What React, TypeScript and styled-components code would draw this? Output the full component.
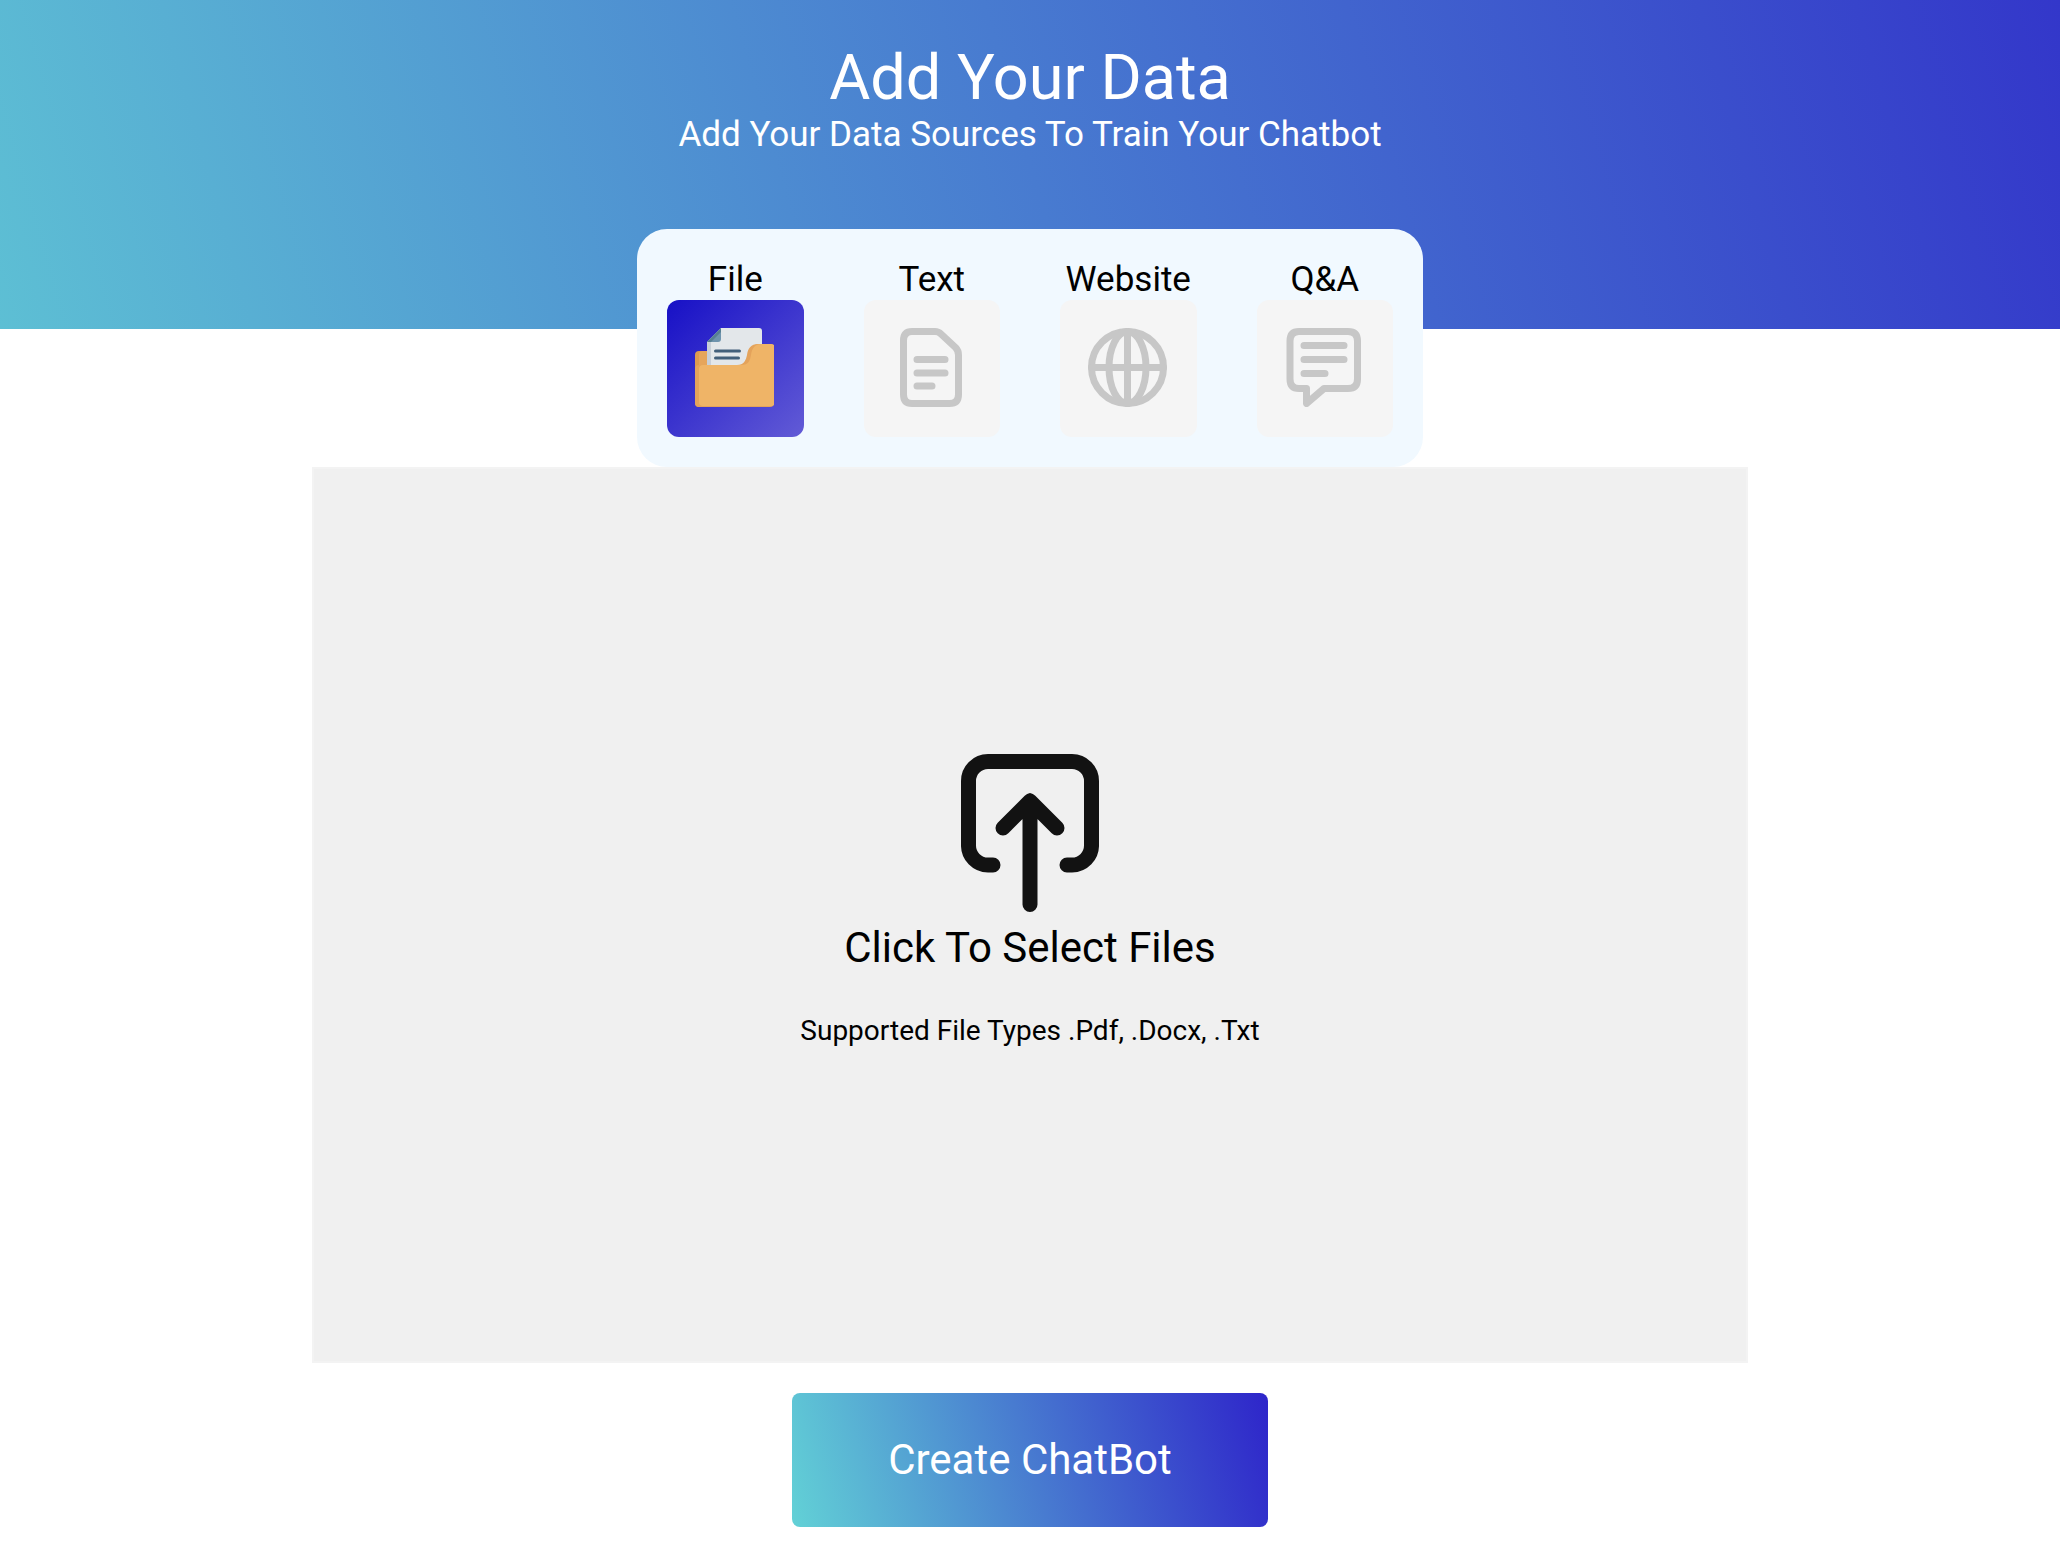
import React, { useRef, useState } from "react";
import styled, { createGlobalStyle, css } from "styled-components";

const GlobalStyle = createGlobalStyle`
  *, *::before, *::after { box-sizing: border-box; }
  body {
    margin: 0;
    background: #ffffff;
    color: #000000;
    font-family: Roboto, "Liberation Sans", sans-serif;
  }
  button { font-family: inherit; color: inherit; cursor: pointer; }
`;

const Page = styled.div`
  display: flex;
  flex-direction: column;
  align-items: center;
`;

const Hero = styled.header`
  align-self: stretch;
  height: 329px;
  padding-top: 40px;
  text-align: center;
  color: #ffffff;
  background: linear-gradient(74deg, #5dbfd4 0%, #487bd0 50%, #3337ca 100%);
`;

const Title = styled.h1`
  margin: 0;
  font-size: 63px;
  line-height: 76px;
  font-weight: 400;
`;

const Subtitle = styled.p`
  margin: 0;
  font-size: 35px;
  line-height: 38px;
`;

const SourceTabs = styled.nav`
  display: grid;
  grid-template-columns: repeat(4, 1fr);
  gap: 60px;
  width: 786px;
  max-width: 100%;
  margin-top: -100px;
  padding: 30px;
  border-radius: 30px;
  background: #f1f9ff;
`;

const SourceButton = styled.button`
  display: flex;
  flex-direction: column;
  align-items: center;
  padding: 0;
  border: 0;
  background: none;
  font-size: 35px;
  line-height: 41px;
`;

const IconTile = styled.span<{ $active: boolean }>`
  display: flex;
  align-items: center;
  justify-content: center;
  align-self: stretch;
  height: 137px;
  padding: 0 2px 2px 0;
  border-radius: 12px;
  background: #f5f5f5;
  ${({ $active }) =>
    $active &&
    css`
      background: linear-gradient(135deg, #1710c6 0%, #625bd6 100%);
    `}
`;

const DropPanel = styled.button`
  display: flex;
  flex-direction: column;
  align-items: center;
  justify-content: center;
  width: calc(100% - 624px);
  min-width: 640px;
  height: 896px;
  padding: 0 0 28px;
  border: 2px solid #f3f3f3;
  background: #f0f0f0;
`;

const PanelHeading = styled.span`
  margin-top: 11px;
  font-size: 42px;
  line-height: 50px;
`;

const PanelHint = styled.span`
  margin-top: 41px;
  font-size: 28px;
  line-height: 34px;
`;

const CreateButton = styled.button`
  width: 476px;
  height: 134px;
  margin: 30px 0 19px;
  padding: 0;
  border: 0;
  border-radius: 8px;
  color: #ffffff;
  font-size: 42px;
  line-height: 50px;
  background: linear-gradient(74deg, #62d1d6 0%, #487bd0 50%, #2e25ca 100%);
`;

const FolderIcon = () => (
  <svg width="79" height="79" viewBox="0 0 79 79" aria-hidden="true">
    <path d="M0 27q0-4 4-4h14v56H4q-4 0-4-4z" fill="#dd9a4f" />
    <path d="M4 27q0-4 4-4h14v26H4z" fill="#e6a55b" />
    <path d="M12 14 26 0h38q3 0 3 3v40H12z" fill="#e3e7ea" />
    <path d="M12 14h4v25h-4z" fill="#c8cfd8" />
    <path d="M12 14 26 0v11q0 3-3 3z" fill="#6f94ad" />
    <path d="M12 14 26 0v4L16 14z" fill="#567f92" />
    <path d="M46 37c8-2 6-9 8-14 2-4 5-7 11-7l-3 24z" fill="#e3a05a" />
    <path d="M20.500 23h24M20.500 30h23" stroke="#425f7a" strokeWidth="3" strokeLinecap="round" />
    <path
      d="M4 37h38c7 0 9-5 10-10 1-7 4-11 11-11h12q4 0 4 4v55q0 4-4 4H4q-4 0-4-4V41q0-4 4-4z"
      fill="#e4a35b"
    />
    <path
      d="M8 37h38c8 0 9-5 10-10 1-7 4-11 10-11h10q4 0 4 4v54q0 4-4 4H8q-4 0-4-4V41q0-4 4-4z"
      fill="#efb467"
    />
  </svg>
);

const OutlineIcon = ({ children }: { children: React.ReactNode }) => (
  <svg
    width="79"
    height="79"
    viewBox="0 0 79 79"
    fill="none"
    stroke="#c7c7c7"
    strokeWidth="7"
    strokeLinecap="round"
    strokeLinejoin="round"
    aria-hidden="true"
  >
    {children}
  </svg>
);

const TextIcon = () => (
  <OutlineIcon>
    <path d="M21 3.500H44Q47.500 3.500 50 6L64.500 19.500Q67.500 22.500 67.500 27V66.500Q67.500 75.500 58.500 75.500H21Q12.500 75.500 12.500 66.500V12.500Q12.500 3.500 21 3.500Z" />
    <path d="M26 31.500h28M26 45h28M26 58h15" />
  </OutlineIcon>
);

const GlobeIcon = () => (
  <OutlineIcon>
    <circle cx="39.500" cy="39.500" r="36" />
    <ellipse cx="39.500" cy="39.500" rx="18.500" ry="36" />
    <path d="M39.500 3.500v72M3.500 39.500h72" />
  </OutlineIcon>
);

const ChatIcon = () => (
  <OutlineIcon>
    <path d="M15 3.500H64Q73.500 3.500 73.500 13V51Q73.500 60.500 64 60.500H40L22.500 75.500V60.500H15Q6 60.500 6 51V13Q6 3.500 15 3.500Z" />
    <path d="M20 17.500h40M20 31.500h40M20 45.500h21" />
  </OutlineIcon>
);

const UploadIcon = () => (
  <svg
    width="138"
    height="158"
    viewBox="0 0 138 158"
    fill="none"
    stroke="#121212"
    strokeWidth="15"
    strokeLinecap="round"
    strokeLinejoin="round"
    aria-hidden="true"
  >
    <path d="M32 111H27A19.500 19.500 0 0 1 7.500 91V27A19.500 19.500 0 0 1 27 7.500H111A19.500 19.500 0 0 1 130.500 27V91A19.500 19.500 0 0 1 111 111H106" />
    <path d="M69 150.500V47M42 74 69 47l27 27" />
  </svg>
);

const sources = [
  { name: "File", Icon: FolderIcon },
  { name: "Text", Icon: TextIcon },
  { name: "Website", Icon: GlobeIcon },
  { name: "Q&A", Icon: ChatIcon },
];

export default function App() {
  const [active, setActive] = useState("File");
  const fileInput = useRef<HTMLInputElement>(null);

  return (
    <>
      <GlobalStyle />
      <Page>
        <Hero>
          <Title>Add Your Data</Title>
          <Subtitle>Add Your Data Sources To Train Your Chatbot</Subtitle>
        </Hero>
        <SourceTabs aria-label="Data sources">
          {sources.map(({ name, Icon }) => (
            <SourceButton
              key={name}
              type="button"
              aria-pressed={name === active}
              onClick={() => setActive(name)}
            >
              {name}
              <IconTile $active={name === active}>
                <Icon />
              </IconTile>
            </SourceButton>
          ))}
        </SourceTabs>
        <DropPanel type="button" onClick={() => fileInput.current?.click()}>
          <UploadIcon />
          <PanelHeading>Click To Select Files</PanelHeading>
          <PanelHint>Supported File Types .Pdf, .Docx, .Txt</PanelHint>
        </DropPanel>
        <input ref={fileInput} type="file" accept=".pdf,.docx,.txt" multiple hidden />
        <CreateButton type="button">Create ChatBot</CreateButton>
      </Page>
    </>
  );
}
